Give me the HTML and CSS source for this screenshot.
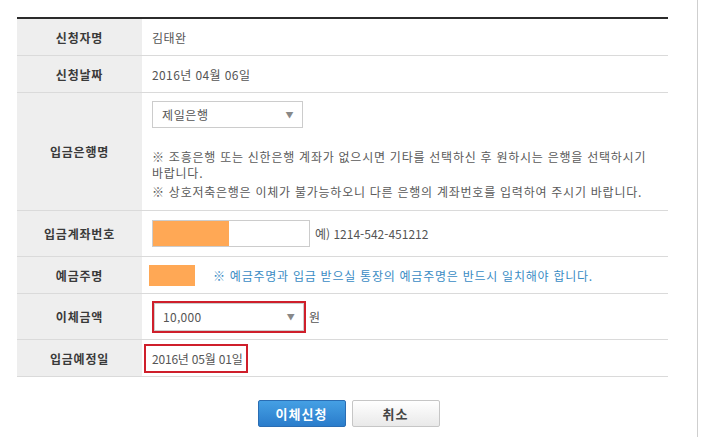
FILE: index.html
```html
<!DOCTYPE html>
<html lang="ko">
<head>
<meta charset="utf-8">
<title>이체신청</title>
<link rel="stylesheet" href="styles.css">
</head>
<body>
<div class="page">
  <div class="form">
    <div class="row h36">
      <div class="label">신청자명</div>
      <div class="value">김태완</div>
    </div>
    <div class="row h36">
      <div class="label">신청날짜</div>
      <div class="value">2016년 04월 06일</div>
    </div>
    <div class="row h117">
      <div class="label">입금은행명</div>
      <div class="value col">
        <div class="select">
          <span>제일은행</span>
          <span class="arrow">▼</span>
        </div>
        <p class="note first">※ 조흥은행 또는 신한은행 계좌가 없으시면 기타를 선택하신 후 원하시는 은행을 선택하시기 바랍니다.</p>
        <p class="note second">※ 상호저축은행은 이체가 불가능하오니 다른 은행의 계좌번호를 입력하여 주시기 바랍니다.</p>
      </div>
    </div>
    <div class="row h45">
      <div class="label">입금계좌번호</div>
      <div class="value">
        <div class="input"><span class="mask wide"></span></div>
        <span class="example">예) 1214-542-451212</span>
      </div>
    </div>
    <div class="row h36">
      <div class="label">예금주명</div>
      <div class="value">
        <span class="mask small"></span>
        <span class="blue">※ 예금주명과 입금 받으실 통장의 예금주명은 반드시 일치해야 합니다.</span>
      </div>
    </div>
    <div class="row h45">
      <div class="label">이체금액</div>
      <div class="value">
        <div class="redbox">
          <div class="select inner">
            <span>10,000</span>
            <span class="arrow">▼</span>
          </div>
        </div>
        <span class="won">원</span>
      </div>
    </div>
    <div class="row h36">
      <div class="label">입금예정일</div>
      <div class="value">
        <div class="redbox date">2016년 05월 01일</div>
      </div>
    </div>
  </div>
  <div class="buttons">
    <button class="btn primary">이체신청</button>
    <button class="btn cancel">취소</button>
  </div>
</div>
</body>
</html>
```
FILE: styles.css
```css
html, body {
  margin: 0;
  padding: 0;
  background: #fff;
}
body {
  font-family: "Noto Sans CJK KR", "Noto Sans", sans-serif;
  font-size: 12px;
  color: #555;
}
.page {
  width: 698px;
  height: 437px;
  box-sizing: border-box;
  border-right: 1px solid #cfcfcf;
  padding: 17px 0 0 17px;
}
.form {
  width: 651px;
  border-top: 2px solid #2b2b2b;
}
.row {
  display: flex;
  border-bottom: 1px solid #dadada;
}
.h36 { height: 36px; }
.h45 { height: 45px; }
.h117 { height: 117px; }
.label {
  width: 125px;
  flex: none;
  background: #eeeeee;
  display: flex;
  align-items: center;
  justify-content: center;
  font-weight: bold;
  color: #3a3a3a;
  letter-spacing: 0.8px;
}
.value {
  flex: 1;
  display: flex;
  align-items: center;
  padding: 0 10px;
  letter-spacing: 0.4px;
  word-break: keep-all;
}
.value.col {
  flex-direction: column;
  align-items: flex-start;
  justify-content: flex-start;
  padding-top: 8px;
}
.select {
  width: 151px;
  height: 27px;
  box-sizing: border-box;
  border: 1px solid #cccccc;
  display: flex;
  align-items: center;
  justify-content: space-between;
  padding: 0 8px 0 9px;
  color: #555;
  background: #fff;
  letter-spacing: 0.6px;
}
.arrow {
  font-size: 8px;
  color: #888;
}
.note {
  margin: 0;
  line-height: 16px;
  color: #5a5a5a;
  letter-spacing: 0.75px;
  word-break: keep-all;
}
.note.first { margin-top: 21px; }
.note.second { margin-top: 3px; }
.input {
  width: 158px;
  height: 27px;
  box-sizing: border-box;
  border: 1px solid #cccccc;
  padding: 0 0 1px 0;
  display: flex;
  flex: none;
}
.mask {
  background: #ffa855;
  display: block;
  flex: none;
}
.mask.wide {
  width: 76px;
  height: 25px;
}
.mask.small {
  width: 46px;
  height: 21px;
  margin-left: -3px;
}
.example {
  margin-left: 5px;
  color: #555;
  letter-spacing: 0;
}
.blue {
  margin-left: 18px;
  color: #3a8cc4;
  letter-spacing: 0.75px;
  white-space: nowrap;
}
.redbox {
  border: 2px solid #cf1f2b;
  box-sizing: border-box;
  flex: none;
}
.select.inner {
  width: 150px;
  height: 28px;
  padding: 0 8px 0 8px;
  letter-spacing: 0.3px;
}
.won {
  margin-left: 3px;
}
.redbox.date {
  width: 104px;
  height: 29px;
  margin-left: -8px;
  display: flex;
  align-items: center;
  padding-left: 6px;
  white-space: nowrap;
  color: #555;
  letter-spacing: -0.2px;
}
.buttons {
  display: flex;
  justify-content: center;
  gap: 6px;
  width: 663px;
  margin-top: 23px;
}
.btn {
  width: 88px;
  height: 27px;
  box-sizing: border-box;
  border-radius: 2px;
  font-family: "Noto Sans CJK KR", sans-serif;
  font-size: 13px;
  font-weight: bold;
  padding: 0;
  letter-spacing: 1px;
}
.btn.primary {
  background: linear-gradient(#45a0e4, #2a7ccb);
  border: 1px solid #2a6db3;
  color: #fff;
}
.btn.cancel {
  background: linear-gradient(#ffffff, #e9e9e9);
  border: 1px solid #c6c6c6;
  color: #444;
}
```
